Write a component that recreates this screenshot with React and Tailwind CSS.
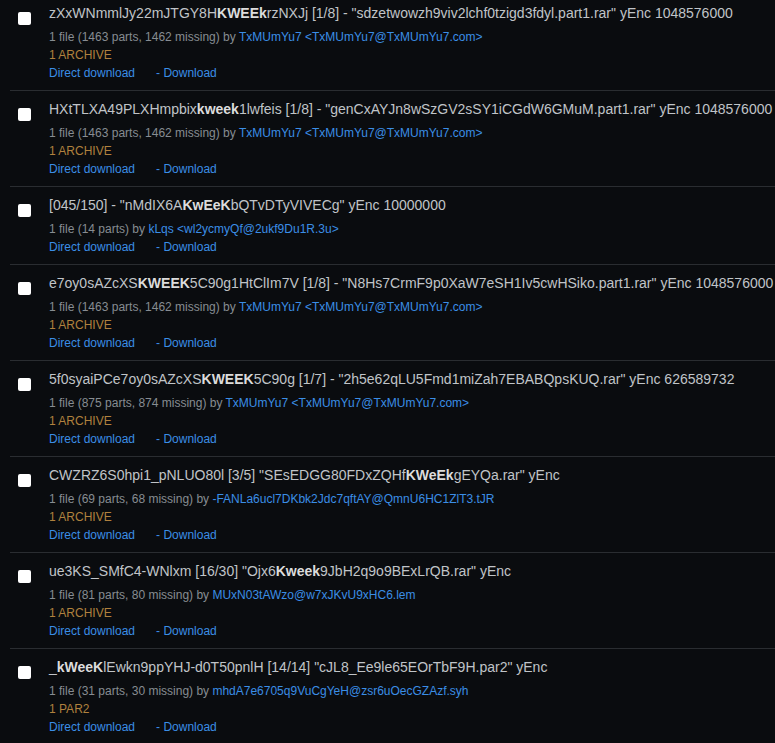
import React from 'react';

const rows = [
  {
    pre: 'zXxWNmmlJy22mJTGY8H', hit: 'KWEEk', post: 'rzNXJj [1/8] - "sdzetwowzh9viv2lchf0tzigd3fdyl.part1.rar" yEnc 1048576000',
    info: '1 file (1463 parts, 1462 missing) by ', name: 'TxMUmYu7', email: '<TxMUmYu7@TxMUmYu7.com>', tag: '1 ARCHIVE',
  },
  {
    pre: 'HXtTLXA49PLXHmpbix', hit: 'kweek', post: '1lwfeis [1/8] - "genCxAYJn8wSzGV2sSY1iCGdW6GMuM.part1.rar" yEnc 1048576000',
    info: '1 file (1463 parts, 1462 missing) by ', name: 'TxMUmYu7', email: '<TxMUmYu7@TxMUmYu7.com>', tag: '1 ARCHIVE',
  },
  {
    pre: '[045/150] - "nMdIX6A', hit: 'KwEeK', post: 'bQTvDTyVIVECg" yEnc 10000000',
    info: '1 file (14 parts) by ', name: 'kLqs', email: '<wl2ycmyQf@2ukf9Du1R.3u>', tag: null,
  },
  {
    pre: 'e7oy0sAZcXS', hit: 'KWEEK', post: '5C90g1HtClIm7V [1/8] - "N8Hs7CrmF9p0XaW7eSH1Iv5cwHSiko.part1.rar" yEnc 1048576000',
    info: '1 file (1463 parts, 1462 missing) by ', name: 'TxMUmYu7', email: '<TxMUmYu7@TxMUmYu7.com>', tag: '1 ARCHIVE',
  },
  {
    pre: '5f0syaiPCe7oy0sAZcXS', hit: 'KWEEK', post: '5C90g [1/7] - "2h5e62qLU5Fmd1miZah7EBABQpsKUQ.rar" yEnc 626589732',
    info: '1 file (875 parts, 874 missing) by ', name: 'TxMUmYu7', email: '<TxMUmYu7@TxMUmYu7.com>', tag: '1 ARCHIVE',
  },
  {
    pre: 'CWZRZ6S0hpi1_pNLUO80l [3/5] "SEsEDGG80FDxZQHf', hit: 'KWeEk', post: 'gEYQa.rar" yEnc',
    info: '1 file (69 parts, 68 missing) by ', name: '-FANLa6ucl7DKbk2Jdc7qftAY@QmnU6HC1ZlT3.tJR', email: null, tag: '1 ARCHIVE',
  },
  {
    pre: 'ue3KS_SMfC4-WNlxm [16/30] "Ojx6', hit: 'Kweek', post: '9JbH2q9o9BExLrQB.rar" yEnc',
    info: '1 file (81 parts, 80 missing) by ', name: 'MUxN03tAWzo@w7xJKvU9xHC6.lem', email: null, tag: '1 ARCHIVE',
  },
  {
    pre: '_', hit: 'kWeeK', post: 'lEwkn9ppYHJ-d0T50pnlH [14/14] "cJL8_Ee9le65EOrTbF9H.par2" yEnc',
    info: '1 file (31 parts, 30 missing) by ', name: 'mhdA7e6705q9VuCgYeH@zsr6uOecGZAzf.syh', email: null, tag: '1 PAR2',
  },
];

function Row({ row, first }) {
  return (
    <div className={`ml-[10px] flex gap-[18px] pl-[8px] pb-2 ${first ? 'pt-[3px]' : 'pt-2 border-t border-[#2a2d31]'}`}>
      <input type="checkbox" className="appearance-none w-[13px] h-[13px] mt-[9px] shrink-0 bg-white rounded-[2px]" />
      <div className="min-w-0">
        <div className="whitespace-nowrap text-[14px] leading-[20px] text-[#c0c4c8]">
          {row.pre}
          <b className="font-bold text-[#dcdcdc]">{row.hit}</b>
          {row.post}
        </div>
        <div className="mt-[5px] text-[12px] leading-[18px]">
          <div className="whitespace-nowrap text-[#878c92]">
            {row.info}
            <a href="#" className="text-[#3b8ee6]">{row.name}</a>
            {row.email && <a href="#" className="text-[#3b8ee6]"> {row.email}</a>}
          </div>
          {row.tag && <div className="text-[#b0813e]">{row.tag}</div>}
          <div className="text-[#3b8ee6]">
            <a href="#">Direct download</a>
            <a href="#" className="ml-[21px]">- Download</a>
          </div>
        </div>
      </div>
    </div>
  );
}

export default function App() {
  return (
    <div className="min-h-screen w-full overflow-hidden bg-[#0a0c0f]" style={{ fontFamily: '"Liberation Sans", Arial, sans-serif' }}>
      {rows.map((row, i) => (
        <Row key={i} row={row} first={i === 0} />
      ))}
    </div>
  );
}
